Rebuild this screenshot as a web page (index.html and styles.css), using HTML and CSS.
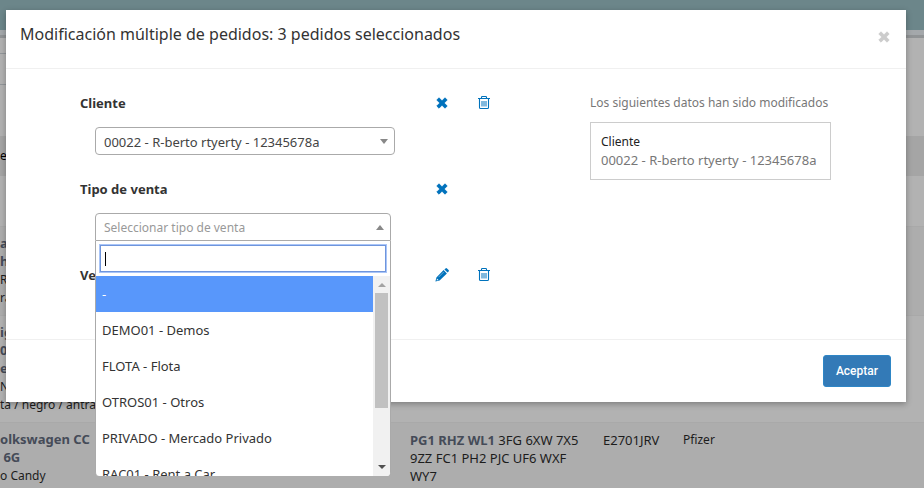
FILE: index.html
```html
<!DOCTYPE html>
<html lang="es">
<head>
<meta charset="utf-8">
<title>Modificación múltiple de pedidos</title>
<link rel="stylesheet" href="styles.css">
</head>
<body>
<svg class="sprite" aria-hidden="true">
  <symbol id="cross" viewBox="0 0 12 12"><path d="M3 0.8 6 3.8 9 0.8 11.2 3 8.2 6 11.2 9 9 11.2 6 8.2 3 11.2 0.8 9 3.8 6 0.8 3Z" fill="currentColor" stroke="currentColor" stroke-width=".8" stroke-linejoin="round"/></symbol>
  <symbol id="trash" viewBox="0 0 14 16"><path d="M1 3.5h12M4.5 3V2.2Q4.5 1.5 5.3 1.5h3.4q.8 0 .8.7V3M2.5 4v8.4q0 1.1 1.1 1.1h6.8q1.1 0 1.1-1.1V4" fill="none" stroke="currentColor" stroke-width="1.1"/><path d="M5 6v5.5M7 6v5.5M9 6v5.5" stroke="currentColor"/></symbol>
  <symbol id="pencil" viewBox="0 0 14 14"><path d="M8.6 2.1 11.9 5.4 4.6 12.6 0.4 13.6 1.4 9.4Z M9.4 1.4 10.5.4q.8-.6 1.5 0l1.6 1.6q.6.7 0 1.5l-1 1.1Z" fill="currentColor"/><path d="M1.9 10.5 3.5 12.1 1.7 12.5Z" fill="#fff"/><path d="M3.5 9.2 8.7 4" stroke="#9bc3e0" stroke-width=".7"/></symbol>
</svg>

<main class="page">
  <div class="topbar"></div>
  <div class="subbar"></div>
  <div class="filters"></div>
  <table class="orders">
    <thead><tr><th>e</th><th></th><th></th><th></th></tr></thead>
    <tbody>
      <tr class="blank"><td colspan="4"></td></tr>
      <tr class="odd"><td><b>a</b><br><b>h</b><br>R<br>ra</td><td></td><td></td><td></td></tr>
      <tr><td><b>ig</b><br><b>0</b><br><b>e</b><br>No<br>ta / negro / antra</td><td></td><td></td><td></td></tr>
      <tr class="odd"><td><b>olkswagen CC</b><br><b>&nbsp;6G</b><br>o Candy</td><td class="code"><b>PG1 RHZ WL1</b> 3FG 6XW 7X5 9ZZ FC1 PH2 PJC UF6 WXF WY7</td><td class="code">E2701JRV</td><td>Pfizer</td></tr>
    </tbody>
  </table>
</main>

<div class="backdrop">
  <section class="modal" role="dialog" aria-labelledby="title">
    <header class="modal-header">
      <h1 id="title">Modificación múltiple de pedidos: 3 pedidos seleccionados</h1>
      <button class="icon close" type="button" aria-label="Cerrar"><svg class="cross"><use href="#cross"/></svg></button>
    </header>
    <form class="modal-body">
      <div class="fields">
        <div class="field">
          <div class="field-head">
            <label for="cliente">Cliente</label>
            <button class="icon" type="button" aria-label="Cancelar"><svg class="cross"><use href="#cross"/></svg></button>
            <button class="icon" type="button" aria-label="Borrar"><svg class="trash"><use href="#trash"/></svg></button>
          </div>
          <div class="control wide">
            <select id="cliente"><option>00022 - R-berto rtyerty - 12345678a</option></select>
            <span class="caret down"></span>
          </div>
        </div>
        <div class="field">
          <div class="field-head">
            <label for="tipo">Tipo de venta</label>
            <button class="icon" type="button" aria-label="Cancelar"><svg class="cross"><use href="#cross"/></svg></button>
          </div>
          <div class="control">
            <button id="tipo" class="combo" type="button" aria-expanded="true">Seleccionar tipo de venta</button>
            <span class="caret up"></span>
            <div class="menu">
              <div class="search"><input type="text" aria-label="Buscar" autofocus><span class="cursor"></span></div>
              <div class="list">
                <ul role="listbox">
                  <li role="option" aria-selected="true">-</li>
                  <li role="option">DEMO01 - Demos</li>
                  <li role="option">FLOTA - Flota</li>
                  <li role="option">OTROS01 - Otros</li>
                  <li role="option">PRIVADO - Mercado Privado</li>
                  <li role="option">RAC01 - Rent a Car</li>
                </ul>
                <div class="scrollbar"><span class="arrow up"></span><span class="thumb"></span><span class="arrow down"></span></div>
              </div>
            </div>
          </div>
        </div>
        <div class="field">
          <div class="field-head">
            <span class="label">Ve</span>
            <button class="icon" type="button" aria-label="Editar"><svg class="pencil"><use href="#pencil"/></svg></button>
            <button class="icon" type="button" aria-label="Borrar"><svg class="trash"><use href="#trash"/></svg></button>
          </div>
        </div>
      </div>
      <aside class="changes">
        <p>Los siguientes datos han sido modificados</p>
        <dl><dt>Cliente</dt><dd>00022 - R-berto rtyerty - 12345678a</dd></dl>
      </aside>
    </form>
    <footer class="modal-footer"><button class="accept" type="button">Aceptar</button></footer>
  </section>
</div>
</body>
</html>
```
FILE: styles.css
```css
* { box-sizing: border-box; }
body {
  margin: 0;
  height: 100vh;
  overflow: hidden;
  position: relative;
  background: #b2b2b2;
  color: #333;
  font: 12px/18px "Noto Sans", sans-serif;
}
button, input, select { font: inherit; color: inherit; margin: 0; }
.sprite { position: absolute; width: 0; height: 0; }

.page { height: 100vh; overflow: hidden; color: #1c1c1c; }
.topbar { height: 30px; background: #6c868a; }
.subbar { height: 8px; background: #a4a8ab; border-bottom: 3px solid #909395; }
.filters { width: 410px; height: 47px; padding-top: 15px; border-bottom: 1px solid #92969a; }
.filters::before { content: ""; display: block; border-top: 1px solid #92969a; }
.orders { width: 100%; margin-top: 51px; border-collapse: collapse; table-layout: fixed; }
.orders th { height: 40px; padding: 0; background: #a5a5a5; text-align: left; font-weight: 400; color: #000; }
.orders td { padding: 8px 0; vertical-align: top; line-height: 18px; }
.orders .blank td { height: 50px; padding: 0; }
.orders .odd td { background: #adadad; }
.orders tbody tr:not(.blank) td { border-top: 1px solid #a9a9a9; }
.orders th:nth-child(1) { width: 410px; }
.orders th:nth-child(2) { width: 193px; }
.orders th:nth-child(3) { width: 80px; }
.orders td:nth-child(2) { padding-right: 12px; }
.orders .code { font-size: 13px; }
.orders b { color: #454b58; font-size: 13px; line-height: 16px; }

.backdrop { position: absolute; inset: 0; padding: 10px 18px 0 6px; }
.modal { background: #fff; box-shadow: 0 2px 6px rgba(0, 0, 0, .3); }
.modal-header {
  display: flex;
  justify-content: space-between;
  align-items: flex-start;
  height: 59px;
  padding: 12px 14px 0;
  border-bottom: 1px solid #f0f0f0;
}
h1 { margin: 0; font-size: 16px; line-height: 24px; font-weight: 400; }
.icon {
  display: flex;
  align-items: center;
  justify-content: center;
  width: 16px;
  height: 18px;
  padding: 0;
  border: 0;
  background: none;
  color: #0072bc;
}
.close { color: #ccc; margin-top: 6px; }
.cross { width: 12px; height: 12px; }
.trash { width: 14px; height: 16px; }
.pencil { width: 14px; height: 14px; }

.modal-body { display: flex; justify-content: space-between; padding: 25px 75px 12px 74px; }
.field { min-height: 61px; }
.field + .field { margin-top: 25px; }
.field-head { display: flex; gap: 26px; }
.field-head label, .label { width: 328px; font-weight: 700; font-size: 13px; }
.control { position: relative; width: 296px; margin: 15px 0 0 15px; }
.control.wide { width: 300px; }
select, .combo {
  display: block;
  width: 100%;
  height: 28px;
  padding: 2px 8px 0;
  appearance: none;
  border: 1px solid #aaa;
  border-radius: 4px;
  background: #fff;
  text-align: left;
  color: #444;
}
select { font-size: 13px; }
.combo { border-radius: 4px 4px 0 0; color: #999; }
.caret { position: absolute; right: 7px; top: 12px; border: 4px solid transparent; }
.caret.down { border-top: 5px solid #888; border-bottom: 0; }
.caret.up { border-bottom: 5px solid #888; border-top: 0; }

.menu {
  position: absolute;
  z-index: 2;
  top: 28px;
  left: 0;
  width: 100%;
  overflow: hidden;
  background: #fff;
  border: 1px solid #aaa;
  border-width: 0 1px;
  border-radius: 0 0 4px 4px;
}
.search { position: relative; padding: 4px; height: 35px; }
.search input {
  display: block;
  width: 100%;
  height: 27px;
  padding: 4px;
  border: 1px solid #6f95dc;
  outline: 1px solid #a9c5f8;
  caret-color: transparent;
}
.cursor { position: absolute; left: 9px; top: 11px; width: 1px; height: 14px; background: #000; }
.list { display: flex; height: 200px; }
.list ul { flex: 1; margin: 0; padding: 0; list-style: none; overflow: hidden; font-size: 13px; }
.list li { height: 36px; padding: 9px 6px; }
.list li[aria-selected] { background: #5897fb; color: #fff; }
.scrollbar {
  display: flex;
  flex-direction: column;
  align-items: center;
  width: 17px;
  background: #f1f1f1;
}
.arrow { border: 4px solid transparent; }
.arrow.up { margin: 7px 0 6px; border-top: 0; border-bottom-color: #a3a3a3; }
.arrow.down { margin: auto 0 7px; border-bottom: 0; border-top-color: #505050; }
.thumb { width: 13px; height: 115px; background: #c1c1c1; }

.changes { min-width: 241px; color: #777; }
.changes p { margin: 0 0 10px; }
.changes dl { margin: 0; padding: 10px; border: 1px solid #ccc; }
.changes dt { color: #222; }
.changes dd { margin: 0; font-size: 13px; }

.modal-footer { display: flex; justify-content: flex-end; padding: 15px; border-top: 1px solid #f0f0f0; }
.accept {
  height: 32px;
  padding: 0 12px;
  border: 1px solid #2e86c6;
  border-radius: 3px;
  background: #337ab7;
  color: #fff;
  font-family: Roboto, sans-serif;
  font-weight: 500;
}
```
